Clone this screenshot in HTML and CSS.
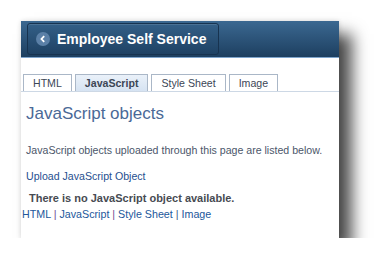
FILE: index.html
```html
<!DOCTYPE html>
<html lang="en">
  <head>
    <meta charset="UTF-8" />
    <title>JavaScript objects</title>
    <link rel="stylesheet" href="styles.css">
  </head>
  <body>

    <div class="window">
      <!-- Header -->
      <div class="header">
        <div class="home-btn">
          <span class="back">
            <svg width="8" height="8" viewBox="0 0 8 8">
              <path d="M5.2 1.2 L2.5 4 L5.2 6.8" fill="none" stroke="#fff" stroke-width="1.8" />
            </svg>
          </span>
          <span class="title">Employee Self Service</span>
        </div>
      </div>

      <!-- Tabs -->
      <div class="tabs">
        <a class="tab">HTML</a>
        <a class="tab active">JavaScript</a>
        <a class="tab">Style Sheet</a>
        <a class="tab">Image</a>
      </div>

      <!-- Content -->
      <div class="content">
        <h1>JavaScript objects</h1>
        <p class="intro">JavaScript objects uploaded through this page are listed below.</p>
        <a class="upload">Upload JavaScript Object</a>
        <div class="empty">There is no JavaScript object available.</div>
      </div>

      <div class="links">
        <a>HTML</a> <span class="sep">|</span> <a>JavaScript</a> <span class="sep">|</span> <a>Style Sheet</a> <span class="sep last">|</span> <a>Image</a>
      </div>
    </div>

  </body>
</html>
```

FILE: styles.css
```css
* {
  box-sizing: border-box;
}

body {
  margin: 0;
  background: #fff;
  font-family: 'Liberation Sans', Arial, Helvetica, sans-serif;
}

a {
  text-decoration: none;
}

.window {
  margin: 21px 0 0 21px;
  width: 318px;
  height: 217px;
  background: #fff;
  box-shadow: 0 0 5px rgba(0, 0, 0, 0.14), 13px 13px 15px rgba(0, 0, 0, 0.7);
}

.header {
  height: 37px;
  padding: 2px 0 0 6px;
  background: linear-gradient(#3b6891, #1d3f60);
  border-bottom: 1px solid #7ea5cd;
}

.home-btn {
  display: flex;
  align-items: center;
  width: 192px;
  height: 32px;
  padding-left: 8px;
  border: 1px solid #173350;
  border-radius: 3px;
  background: linear-gradient(#335f87, #1f4264);
  box-shadow: inset 0 1px 0 rgba(255, 255, 255, 0.12);
}

.back {
  display: flex;
  align-items: center;
  justify-content: center;
  width: 14px;
  height: 14px;
  border-radius: 50%;
  background: #5b80a7;
}

.title {
  margin-left: 7px;
  color: #fff;
  font-size: 14px;
  font-weight: bold;
}

.tabs {
  display: flex;
  gap: 3px;
  margin-top: 16px;
  padding-left: 2px;
  border-bottom: 1px solid #cdd8e5;
}

.tab {
  height: 17px;
  padding: 0 9px;
  border: 1px solid #aab7c7;
  border-bottom: none;
  background: #fff;
  color: #3c4656;
  font-size: 10.6px;
  line-height: 16px;
}

.tab.active {
  background: linear-gradient(#eaf1f9, #d6e3f2);
  font-weight: bold;
}

.content {
  padding-left: 5px;
}

.content h1 {
  margin: 12px 0 0;
  color: #4a6997;
  font-size: 17px;
  font-weight: normal;
  line-height: 20px;
}

.intro {
  margin: 19px 0 0;
  color: #4b566a;
  font-size: 10.6px;
  line-height: 14px;
}

.upload {
  display: block;
  margin-top: 12px;
  color: #1f4f8f;
  font-size: 10.6px;
  line-height: 14px;
}

.empty {
  margin-top: 8px;
  padding-left: 3px;
  color: #474b52;
  font-size: 11px;
  font-weight: bold;
  line-height: 14px;
}

.links {
  margin-top: 2px;
  padding-left: 1px;
  font-size: 10.7px;
  line-height: 14px;
  color: #22579b;
}

.links .sep {
  color: #6e4c93;
}

.links .sep.last {
  color: #3d5a85;
}
```
